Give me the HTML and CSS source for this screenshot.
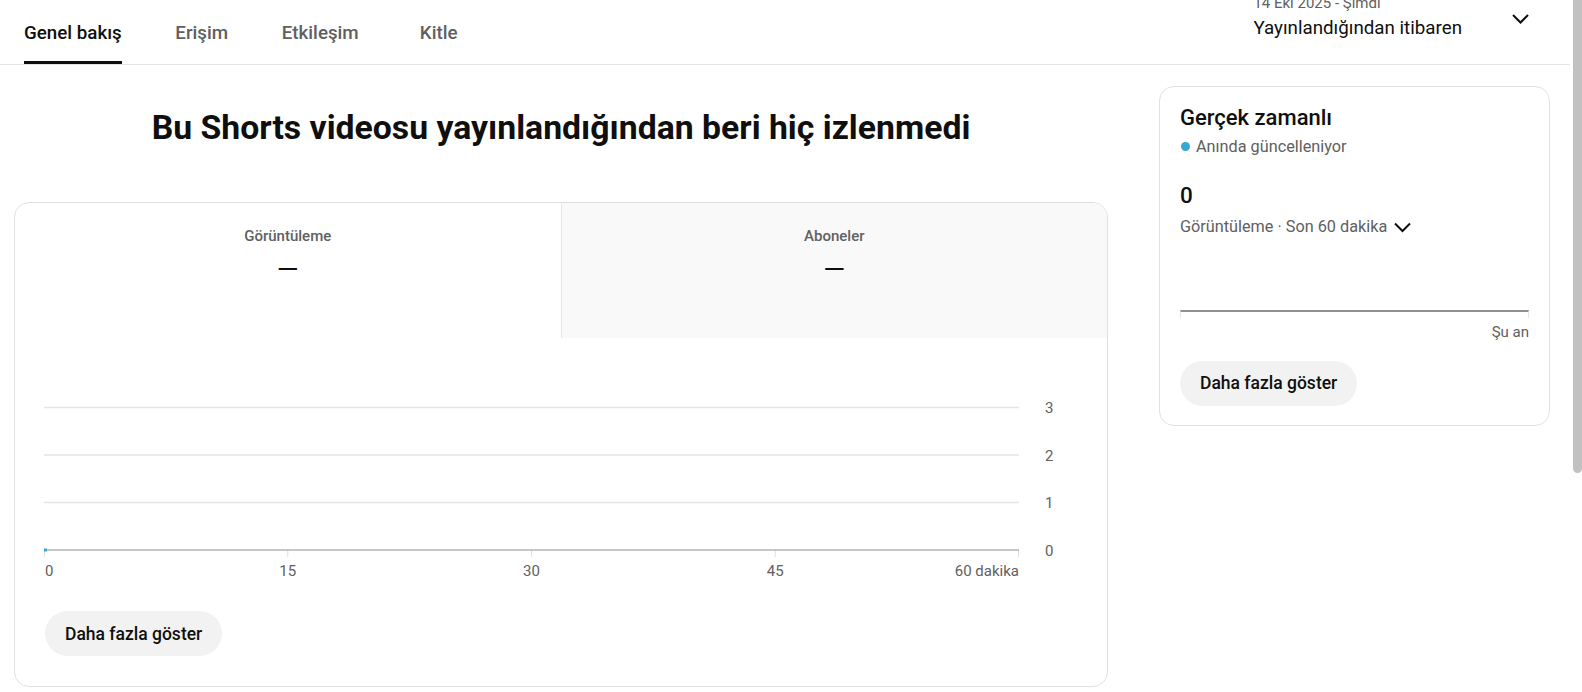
FILE: index.html
```html
<!DOCTYPE html>
<html lang="tr">
<head>
    <meta charset="UTF-8">
    <meta name="viewport" content="width=device-width, initial-scale=1.0">
    <title>Kanal analizi - Genel bakış</title>
    <link rel="stylesheet" href="styles.css">
</head>
<body>
    <div class="page">
        <!-- Sekmeler ve tarih aralığı -->
        <div class="topbar">
            <div class="tabs">
                <div class="tab active">Genel bakış</div>
                <div class="tab">Erişim</div>
                <div class="tab">Etkileşim</div>
                <div class="tab">Kitle</div>
            </div>
            <div class="range">
                <div class="range-dates">14 Eki 2025 - Şimdi</div>
                <div class="range-name">Yayınlandığından itibaren</div>
            </div>
            <svg class="range-chevron" width="17" height="10" viewBox="0 0 17 10">
                <polyline points="1,1 8.5,8.5 16,1" fill="none" stroke="#0f0f0f" stroke-width="2"/>
            </svg>
        </div>

        <div class="content">
            <div class="main-col">
                <h1 class="headline">Bu Shorts videosu yayınlandığından beri hiç izlenmedi</h1>

                <div class="card">
                    <div class="metrics">
                        <div class="metric">
                            <div class="metric-label">Görüntüleme</div>
                            <div class="metric-value">—</div>
                        </div>
                        <div class="metric muted">
                            <div class="metric-label">Aboneler</div>
                            <div class="metric-value">—</div>
                        </div>
                    </div>

                    <div class="chart">
                        <svg width="1050" height="195" viewBox="0 0 1050 195">
                            <g stroke="#e5e5e5" stroke-width="1.5">
                                <line x1="0" y1="17.5" x2="975" y2="17.5"/>
                                <line x1="0" y1="65" x2="975" y2="65"/>
                                <line x1="0" y1="112.5" x2="975" y2="112.5"/>
                            </g>
                            <g stroke="#e0e0e0" stroke-width="1">
                                <line x1="0.5" y1="160" x2="0.5" y2="167"/>
                                <line x1="243.75" y1="160" x2="243.75" y2="167"/>
                                <line x1="487.5" y1="160" x2="487.5" y2="167"/>
                                <line x1="731.25" y1="160" x2="731.25" y2="167"/>
                                <line x1="974.5" y1="160" x2="974.5" y2="167"/>
                            </g>
                            <line x1="0" y1="160" x2="975" y2="160" stroke="#909090" stroke-width="1.2"/>
                            <rect x="0" y="158.5" width="3" height="3" fill="#3ea6cf"/>
                            <g class="axis-text">
                                <text x="1001" y="23">3</text>
                                <text x="1001" y="70.5">2</text>
                                <text x="1001" y="118">1</text>
                                <text x="1001" y="165.5">0</text>
                                <text x="1" y="186">0</text>
                                <text x="243.75" y="186" text-anchor="middle">15</text>
                                <text x="487.5" y="186" text-anchor="middle">30</text>
                                <text x="731.25" y="186" text-anchor="middle">45</text>
                                <text x="975" y="186" text-anchor="end">60 dakika</text>
                            </g>
                        </svg>
                    </div>

                    <button class="more-btn main-more">Daha fazla göster</button>
                </div>
            </div>

            <div class="side-col">
                <div class="card realtime">
                    <div class="rt-title">Gerçek zamanlı</div>
                    <div class="rt-live"><span class="live-dot"></span>Anında güncelleniyor</div>
                    <div class="rt-count">0</div>
                    <div class="rt-metric">
                        Görüntüleme · Son 60 dakika
                        <svg width="17" height="11" viewBox="0 0 17 11">
                            <polyline points="1,1.5 8.5,9 16,1.5" fill="none" stroke="#0f0f0f" stroke-width="2"/>
                        </svg>
                    </div>
                    <div class="rt-chart"></div>
                    <div class="rt-now">Şu an</div>
                    <button class="more-btn">Daha fazla göster</button>
                </div>
            </div>
        </div>
    </div>
    <div class="scroll-thumb"></div>
</body>
</html>
```

FILE: styles.css
```css
body {
    margin: 0;
    font-family: Roboto, "Noto Sans", Arial, sans-serif;
    color: #0f0f0f;
    background: #ffffff;
    overflow: hidden;
}

.page {
    margin-right: 12px;
}

/* ---- sekme çubuğu ---- */
.topbar {
    display: flex;
    height: 64px;
    border-bottom: 1px solid #e5e5e5;
    padding: 0 41px 0 24px;
}

.tabs {
    display: flex;
    gap: 52px;
    flex: 1;
}

.tab {
    box-sizing: border-box;
    height: 64px;
    min-width: 56px;
    padding-top: 21px;
    font-size: 18.75px;
    line-height: 25px;
    font-weight: 500;
    color: #606060;
    text-align: center;
    border-bottom: 3px solid transparent;
}

.tab.active {
    color: #0f0f0f;
    border-bottom-color: #0f0f0f;
}

.range {
    margin-top: -6.6px;
    margin-right: 50px;
}

.range-dates {
    font-size: 15px;
    line-height: 20px;
    color: #606060;
    margin-bottom: 3px;
}

.range-name {
    font-size: 18.75px;
    line-height: 25px;
}

.range-chevron {
    margin-top: 14px;
}

/* ---- içerik ---- */
.content {
    display: flex;
    gap: 51px;
    padding: 21px 20px 0 14px;
}

.main-col {
    flex: 1;
}

.side-col {
    width: 391px;
}

.headline {
    margin: 22px 0 54px;
    font-size: 33.75px;
    line-height: 40px;
    font-weight: 700;
    text-align: center;
}

.card {
    border: 1px solid #e0e0e0;
    border-radius: 15px;
    overflow: hidden;
    box-sizing: border-box;
}

.metrics {
    display: flex;
    height: 135px;
}

.metric {
    flex: 1;
    text-align: center;
}

.metric.muted {
    background: #f9f9f9;
    border-left: 1px solid #e5e5e5;
}

.metric-label {
    margin-top: 23px;
    font-size: 15px;
    line-height: 20px;
    font-weight: 500;
    color: #606060;
}

.metric-value {
    margin-top: 9px;
    font-size: 28px;
    line-height: 30px;
    font-weight: 400;
}

.chart {
    padding: 52px 0 0 29px;
}

.chart svg {
    display: block;
}

.axis-text text {
    font-family: Roboto, Arial, sans-serif;
    font-size: 15px;
    fill: #606060;
}

.more-btn {
    height: 45px;
    padding: 0 20px;
    border: none;
    border-radius: 23px;
    background: #f2f2f2;
    font-family: Roboto, Arial, sans-serif;
    font-size: 17.5px;
    font-weight: 500;
    color: #0f0f0f;
    cursor: pointer;
}

.main-more {
    margin: 26px 0 30px 30px;
}

/* ---- gerçek zamanlı kartı ---- */
.realtime {
    padding: 17px 20px 19px;
}

.rt-title {
    font-size: 22px;
    line-height: 28px;
    font-weight: 500;
}

.rt-live {
    display: flex;
    align-items: center;
    margin-top: 4.5px;
    font-size: 16.25px;
    line-height: 20px;
    color: #606060;
}

.live-dot {
    width: 9px;
    height: 9px;
    border-radius: 50%;
    background: #35a9d4;
    margin: 0 6px 0 1px;
}

.rt-count {
    margin-top: 23.5px;
    font-size: 22.5px;
    line-height: 30px;
    font-weight: 500;
}

.rt-metric {
    display: flex;
    align-items: center;
    gap: 7px;
    margin-top: 7px;
    font-size: 16.25px;
    line-height: 20px;
    color: #606060;
}

.rt-chart {
    margin-top: 73px;
    height: 6px;
    border-top: 2px solid #909090;
    border-left: 1px solid #e5e5e5;
    border-right: 1px solid #e5e5e5;
}

.rt-now {
    margin-top: 4px;
    text-align: right;
    font-size: 15px;
    line-height: 20px;
    color: #606060;
}

.realtime .more-btn {
    margin-top: 18.5px;
}

/* kaydırma çubuğu */
.scroll-thumb {
    position: fixed;
    top: 0;
    right: 0;
    width: 9px;
    height: 473px;
    background: #c1c1c1;
    border-radius: 0 0 5px 5px;
}
```
